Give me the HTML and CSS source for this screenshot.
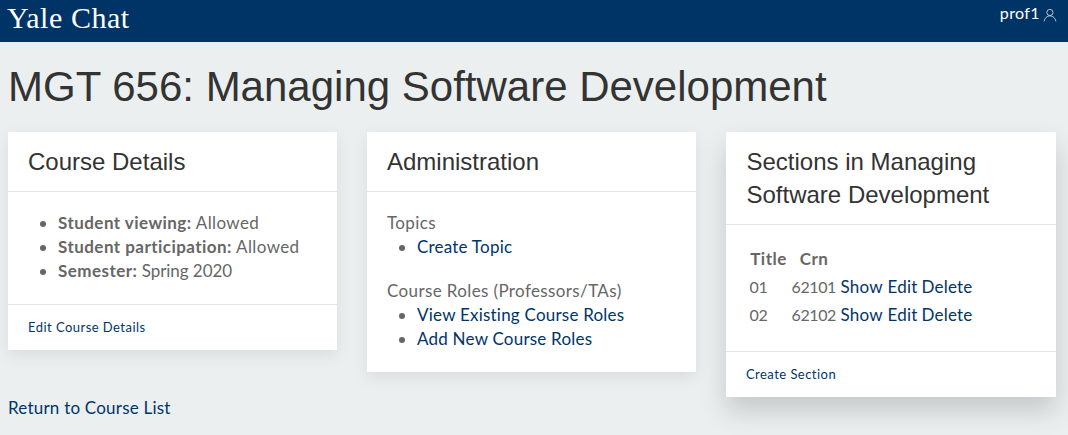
FILE: index.html
```
<!DOCTYPE html>
<html lang="en">
<head>
<meta charset="utf-8">
<title>Yale Chat</title>
<link rel="stylesheet" href="styles.css">
</head>
<body>
<header class="navbar">
  <a class="brand">Yale Chat</a>
  <a class="account"><span>prof1</span>
    <svg class="user-icon" viewBox="0 0 20 20" width="14" height="14"><circle cx="9.9" cy="6.4" r="4.4"/><path d="M1.5,19 C2.3,14.5 5.8,11.2 10,11.2 C14.2,11.2 17.7,14.6 18.5,19.2"/></svg>
  </a>
</header>
<main class="page">
  <h1 class="page-title">MGT 656: Managing Software Development</h1>
  <div class="grid">
    <section class="card">
      <h3 class="card-header">Course Details</h3>
      <div class="card-body">
        <ul class="list">
          <li><b>Student viewing:</b> Allowed</li>
          <li><b>Student participation:</b> Allowed</li>
          <li><b>Semester:</b><span class="term"> Spring 2020</span></li>
        </ul>
      </div>
      <div class="card-footer"><a class="link">Edit Course Details</a></div>
    </section>
    <section class="card">
      <h3 class="card-header">Administration</h3>
      <div class="card-body">
        <div>Topics</div>
        <ul class="list">
          <li><a class="link">Create Topic</a></li>
        </ul>
        <div class="roles">Course Roles (Professors/TAs)</div>
        <ul class="list">
          <li><a class="link">View Existing Course Roles</a></li>
          <li><a class="link">Add New Course Roles</a></li>
        </ul>
      </div>
    </section>
    <section class="card card-raised">
      <h3 class="card-header">Sections in Managing Software Development</h3>
      <div class="card-body">
        <table class="sections">
          <tr><th class="col-title">Title</th><th class="col-crn">Crn</th><th class="col-show"></th><th class="col-edit"></th><th class="col-delete"></th></tr>
          <tr><td class="num">01</td><td class="num">62101</td><td><a class="link">Show</a></td><td><a class="link">Edit</a></td><td><a class="link">Delete</a></td></tr>
          <tr><td class="num">02</td><td class="num">62102</td><td><a class="link">Show</a></td><td><a class="link">Edit</a></td><td><a class="link">Delete</a></td></tr>
        </table>
      </div>
      <div class="card-footer"><a class="link">Create Section</a></div>
    </section>
  </div>
  <a class="link return">Return to Course List</a>
</main>
</body>
</html>
```
FILE: styles.css
```
* { box-sizing: border-box; }
body {
  margin: 0;
  min-height: 435px;
  background: #ebeff0;
  color: #666;
  font: 17px/24px Lato, "Noto Sans", sans-serif;
  letter-spacing: 0.38px;
}
.navbar {
  height: 42px;
  padding: 0 11px 0 7px;
  display: flex;
  justify-content: space-between;
  align-items: flex-start;
  background: #003466;
  color: #fff;
}
.brand {
  font: 30px/36px "Liberation Serif", serif;
  letter-spacing: 0.55px;
}
.account {
  display: flex;
  gap: 3px;
  padding-top: 1px;
  font-size: 16px;
  color: #fff;
}
.user-icon {
  margin-top: 7px;
  fill: none;
  stroke: #e0e7ee;
  stroke-width: 1.1;
}
.page {
  height: 393px;
  padding: 20px 12px 0 8px;
}
.page-title {
  margin: 0 0 20px;
  font: 400 42px/50px "Liberation Sans", sans-serif;
  letter-spacing: 0;
  color: #333;
}
.grid {
  display: grid;
  grid-template-columns: 329px 329px 330px;
  gap: 30px;
  align-items: start;
}
.card {
  background: #fff;
  box-shadow: 0 5px 15px rgba(0, 0, 0, 0.08);
}
.card-raised { box-shadow: 0 14px 25px rgba(0, 0, 0, 0.16); }
.card-header {
  margin: 0;
  padding: 13px 20px;
  border-bottom: 1px solid #e5e5e5;
  font: 400 24px/33px "Liberation Sans", sans-serif;
  letter-spacing: 0;
  color: #333;
}
.card-body { padding: 19px 20px 21px; }
.card-raised > * { padding-left: 20.5px; }
.list {
  margin: 0;
  padding-left: 30px;
}
.list b { letter-spacing: 0.46px; }
.list .term { letter-spacing: -0.05px; }
.roles { margin-top: 20px; }
.card-footer {
  padding: 13px 20px;
  border-top: 1px solid #e5e5e5;
  font-size: 13px;
  line-height: 19px;
}
.link {
  color: #00356b;
  letter-spacing: 0.22px;
}
.card-footer .link { letter-spacing: 0.46px; }
.sections {
  table-layout: fixed;
  width: 228px;
  border-spacing: 2px;
  border-collapse: separate;
}
.sections th, .sections td {
  padding: 1px;
  white-space: nowrap;
  text-align: left;
}
.sections th {
  text-align: center;
  letter-spacing: 0.5px;
}
.sections .num {
  font-size: 16px;
  letter-spacing: -0.4px;
}
.col-title { width: 40px; }
.col-crn { width: 47px; }
.col-show { width: 45px; }
.col-edit { width: 32px; }
.col-delete { width: 52px; }
.return {
  display: block;
  width: max-content;
  margin-top: -1px;
}
```
